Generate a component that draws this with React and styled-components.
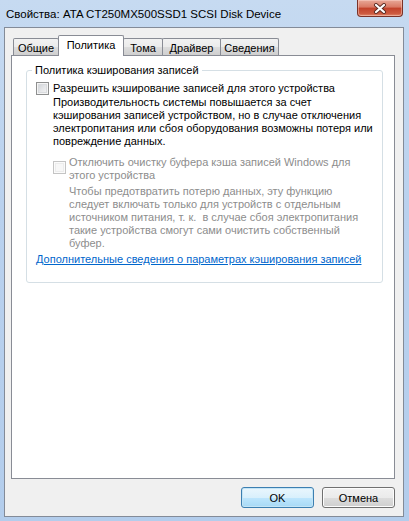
import styled, { createGlobalStyle } from 'styled-components'

const FONT = `"Liberation Sans", Arial, sans-serif`

const GlobalStyle = createGlobalStyle`
  html, body {
    margin: 0;
    padding: 0;
  }
  body {
    font-family: ${FONT};
    font-size: 11px;
    color: #000;
  }
`

const Window = styled.div`
  width: 409px;
  height: 521px;
  box-sizing: border-box;
  display: flex;
  flex-direction: column;
  padding: 0 5px 4px 4px;
  background: linear-gradient(to bottom, #c6daf1 0%, #b9d1ee 40%, #b3cdec 100%);
`

const TitleBar = styled.div`
  height: 27px;
  flex: none;
  display: flex;
  justify-content: space-between;
  align-items: flex-start;
`

const Title = styled.div`
  align-self: center;
  padding-left: 2px;
  font-size: 11.5px;
  color: #000;
  white-space: nowrap;
`

const CloseButton = styled.div`
  width: 46px;
  height: 17px;
  margin-right: 1px;
  box-sizing: border-box;
  border: 1px solid #7a3228;
  border-top: none;
  border-radius: 0 0 4px 4px;
  background: linear-gradient(to bottom, #e8a898 0%, #d97863 45%, #c2412a 50%, #cd5a40 85%, #e48b6e 100%);
  box-shadow: inset 0 0 0 1px rgba(255, 220, 210, 0.45);
  display: flex;
  align-items: center;
  justify-content: center;
`

const Client = styled.div`
  flex: 1;
  display: flex;
  flex-direction: column;
  border: 1px solid #838b98;
  background: #f0f0f0;
  padding: 7px 8px 8px 6px;
  min-height: 0;
`

const TabRow = styled.div`
  display: flex;
  align-items: flex-end;
  height: 21px;
  padding-left: 2px;
  margin-bottom: -1px;
  position: relative;
  z-index: 1;
`

const Tab = styled.div`
  box-sizing: border-box;
  width: ${(p) => p.$width}px;
  height: ${(p) => (p.$active ? '21px' : '17px')};
  margin-bottom: ${(p) => (p.$active ? '0' : '1px')};
  margin-left: -1px;
  border: 1px solid #898c95;
  border-bottom: none;
  border-radius: 2px 2px 0 0;
  background: ${(p) =>
    p.$active
      ? '#fff'
      : 'linear-gradient(to bottom, #f2f2f2 0%, #ebebeb 50%, #dddddd 51%, #cfcfcf 100%)'};
  display: flex;
  align-items: center;
  justify-content: center;
  padding-top: ${(p) => (p.$active ? '0' : '1px')};
  padding-bottom: ${(p) => (p.$active ? '2px' : '0')};
  white-space: nowrap;
  position: relative;
  z-index: ${(p) => (p.$active ? 2 : 1)};

  &:first-child {
    margin-left: 0;
  }
`

const Panel = styled.div`
  flex: 1;
  background: #fff;
  border: 1px solid #898c95;
  padding: 7px 11px 0 14px;
`

const Group = styled.fieldset`
  margin: 0;
  min-width: 0;
  border: 1px solid #d5dfe5;
  border-radius: 3px;
  padding: 3px 8px 16px 9px;
`

const Legend = styled.legend`
  margin-left: -4px;
  padding: 0 3px;
  line-height: 15px;
`

const CheckRow = styled.div`
  display: flex;
  align-items: ${(p) => (p.$top ? 'flex-start' : 'center')};
  margin-left: ${(p) => p.$indent || 0}px;
  margin-top: ${(p) => p.$gap || 0}px;
  line-height: ${(p) => (p.$top ? '13px' : '15px')};
  color: ${(p) => (p.$disabled ? '#8d8d8d' : '#000')};
  white-space: nowrap;
`

const Box = styled.span`
  flex: none;
  width: 13px;
  height: 13px;
  box-sizing: border-box;
  margin-top: ${(p) => p.$offset || 0}px;
  margin-right: ${(p) => p.$space}px;
  border: 1px solid ${(p) => (p.$disabled ? '#c4c4c4' : '#8e8f8f')};
  background: ${(p) =>
    p.$disabled
      ? '#f7f7f7'
      : 'linear-gradient(135deg, #cbcfd5 0%, #e6e7e9 55%, #f6f6f6 100%)'};
  box-shadow: inset 0 0 0 1px ${(p) => (p.$disabled ? '#fbfbfb' : '#f4f4f4')},
    inset 0 0 0 2px ${(p) => (p.$disabled ? '#ececec' : '#d9dbde')};
`

const Description = styled.div`
  margin-left: ${(p) => p.$indent}px;
  margin-top: ${(p) => p.$gap || 0}px;
  line-height: 13px;
  color: ${(p) => (p.$disabled ? '#8d8d8d' : '#000')};
  white-space: nowrap;
`

const Link = styled.a`
  display: block;
  margin-top: 3px;
  line-height: 13px;
  color: #0066cc;
  text-decoration: underline;
  white-space: nowrap;
  cursor: pointer;
`

const ButtonRow = styled.div`
  display: flex;
  justify-content: flex-end;
  gap: 8px;
  margin-top: 8px;
  flex: none;
`

const Button = styled.button`
  width: 73px;
  height: 21px;
  box-sizing: border-box;
  padding: 0;
  font-family: ${FONT};
  font-size: 11px;
  color: #000;
  border-radius: 3px;
  border: 1px solid ${(p) => (p.$default ? '#3c7fb1' : '#707070')};
  background: ${(p) =>
    p.$default
      ? 'linear-gradient(to bottom, #eaf6fd 0%, #d9f0fc 50%, #bee6fd 51%, #a7d9f5 100%)'
      : 'linear-gradient(to bottom, #f2f2f2 0%, #ebebeb 50%, #dddddd 51%, #cfcfcf 100%)'};
  box-shadow: inset 0 0 0 1px ${(p) => (p.$default ? '#c4e5f6' : '#fcfcfc')};
`

const tabs = [
  { label: 'Общие', width: 46 },
  { label: 'Политика', width: 66, active: true },
  { label: 'Тома', width: 40 },
  { label: 'Драйвер', width: 59 },
  { label: 'Сведения', width: 59 },
]

function CloseGlyph() {
  return (
    <svg width="14" height="11" viewBox="0 0 14 11">
      <path d="M3 2 L11 9 M11 2 L3 9" stroke="#5a2a22" strokeWidth="4" strokeLinecap="round" fill="none" />
      <path d="M3 2 L11 9 M11 2 L3 9" stroke="#fff" strokeWidth="2.2" strokeLinecap="round" fill="none" />
    </svg>
  )
}

export default function App() {
  return (
    <>
      <GlobalStyle />
      <Window>
        <TitleBar>
          <Title>Свойства: ATA CT250MX500SSD1 SCSI Disk Device</Title>
          <CloseButton>
            <CloseGlyph />
          </CloseButton>
        </TitleBar>
        <Client>
          <TabRow>
            {tabs.map((t) => (
              <Tab key={t.label} $active={t.active} $width={t.width}>
                {t.label}
              </Tab>
            ))}
          </TabRow>
          <Panel>
            <Group>
              <Legend>Политика кэширования записей</Legend>
              <CheckRow>
                <Box $space={4} />
                Разрешить кэширование записей для этого устройства
              </CheckRow>
              <Description $indent={17}>
                Производительность системы повышается за счет
                <br />
                кэширования записей устройством, но в случае отключения
                <br />
                электропитания или сбоя оборудования возможны потеря или
                <br />
                повреждение данных.
              </Description>
              <CheckRow $top $disabled $indent={17} $gap={8}>
                <Box $space={3} $offset={5} $disabled />
                <span>
                  Отключить очистку буфера кэша записей Windows для
                  <br />
                  этого устройства
                </span>
              </CheckRow>
              <Description $indent={33} $gap={3} $disabled>
                Чтобы предотвратить потерю данных, эту функцию
                <br />
                следует включать только для устройств с отдельным
                <br />
                источником питания, т. к.&nbsp; в случае сбоя электропитания
                <br />
                такие устройства смогут сами очистить собственный
                <br />
                буфер.
              </Description>
              <Link>Дополнительные сведения о параметрах кэширования записей</Link>
            </Group>
          </Panel>
          <ButtonRow>
            <Button $default>OK</Button>
            <Button>Отмена</Button>
          </ButtonRow>
        </Client>
      </Window>
    </>
  )
}
